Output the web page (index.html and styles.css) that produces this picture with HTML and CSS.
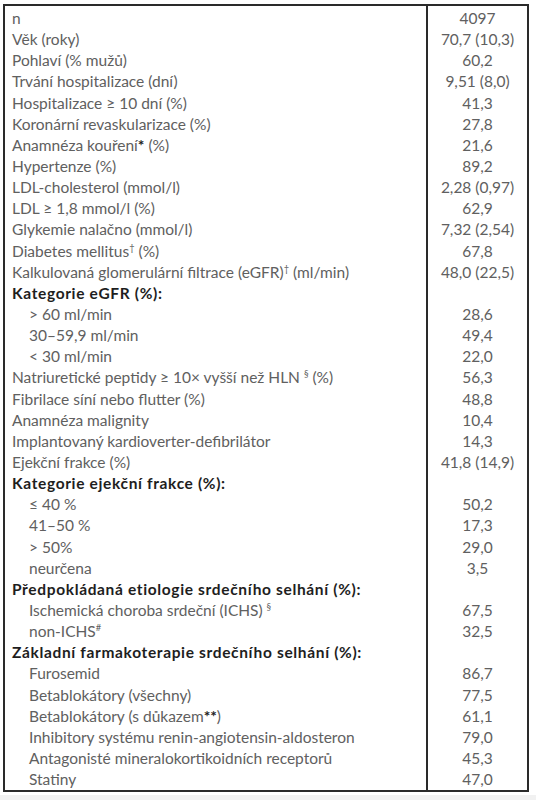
FILE: index.html
```html
<!DOCTYPE html>
<html lang="cs">

<head>
    <meta charset="UTF-8">
    <meta name="viewport" content="width=device-width, initial-scale=1.0">
    <title>Charakteristika souboru</title>

    <link rel="stylesheet" href="styles.css">
</head>

<body>
    <main class="sheet">
        <table class="data">
            <tbody>
                <tr><td>n</td><td class="value">4097</td></tr>
                <tr><td>Věk (roky)</td><td class="value">70,7 (10,3)</td></tr>
                <tr><td>Pohlaví (% mužů)</td><td class="value">60,2</td></tr>
                <tr><td>Trvání hospitalizace (dní)</td><td class="value">9,51 (8,0)</td></tr>
                <tr><td>Hospitalizace ≥ 10 dní (%)</td><td class="value">41,3</td></tr>
                <tr><td>Koronární revaskularizace (%)</td><td class="value">27,8</td></tr>
                <tr><td>Anamnéza kouření<span class="mark">*</span> (%)</td><td class="value">21,6</td></tr>
                <tr><td>Hypertenze (%)</td><td class="value">89,2</td></tr>
                <tr><td>LDL-cholesterol (mmol/l)</td><td class="value">2,28 (0,97)</td></tr>
                <tr><td>LDL ≥ 1,8 mmol/l (%)</td><td class="value">62,9</td></tr>
                <tr><td>Glykemie nalačno (mmol/l)</td><td class="value">7,32 (2,54)</td></tr>
                <tr><td>Diabetes mellitus<sup>†</sup> (%)</td><td class="value">67,8</td></tr>
                <tr><td>Kalkulovaná glomerulární filtrace (eGFR)<sup>†</sup> (ml/min)</td><td class="value">48,0 (22,5)</td></tr>
                <tr class="group"><td>Kategorie eGFR (%):</td><td class="value"></td></tr>
                <tr><td class="sub">&gt; 60 ml/min</td><td class="value">28,6</td></tr>
                <tr><td class="sub">30–59,9 ml/min</td><td class="value">49,4</td></tr>
                <tr><td class="sub">&lt; 30 ml/min</td><td class="value">22,0</td></tr>
                <tr><td>Natriuretické peptidy ≥ 10× vyšší než HLN <sup>§</sup> (%)</td><td class="value">56,3</td></tr>
                <tr><td>Fibrilace síní nebo flutter (%)</td><td class="value">48,8</td></tr>
                <tr><td>Anamnéza malignity</td><td class="value">10,4</td></tr>
                <tr><td>Implantovaný kardioverter-defibrilátor</td><td class="value">14,3</td></tr>
                <tr><td>Ejekční frakce (%)</td><td class="value">41,8 (14,9)</td></tr>
                <tr class="group"><td>Kategorie ejekční frakce (%):</td><td class="value"></td></tr>
                <tr><td class="sub">≤ 40 %</td><td class="value">50,2</td></tr>
                <tr><td class="sub">41–50 %</td><td class="value">17,3</td></tr>
                <tr><td class="sub">&gt; 50%</td><td class="value">29,0</td></tr>
                <tr><td class="sub">neurčena</td><td class="value">3,5</td></tr>
                <tr class="group"><td>Předpokládaná etiologie srdečního selhání (%):</td><td class="value"></td></tr>
                <tr><td class="sub">Ischemická choroba srdeční (ICHS) <sup>§</sup></td><td class="value">67,5</td></tr>
                <tr><td class="sub">non-ICHS<sup>#</sup></td><td class="value">32,5</td></tr>
                <tr class="group"><td>Základní farmakoterapie srdečního selhání (%):</td><td class="value"></td></tr>
                <tr><td class="sub">Furosemid</td><td class="value">86,7</td></tr>
                <tr><td class="sub">Betablokátory (všechny)</td><td class="value">77,5</td></tr>
                <tr><td class="sub">Betablokátory (s důkazem<span class="mark">**</span>)</td><td class="value">61,1</td></tr>
                <tr><td class="sub">Inhibitory systému renin-angiotensin-aldosteron</td><td class="value">79,0</td></tr>
                <tr><td class="sub">Antagonisté mineralokortikoidních receptorů</td><td class="value">45,3</td></tr>
                <tr><td class="sub">Statiny</td><td class="value">47,0</td></tr>
            </tbody>
        </table>
    </main>
</body>

</html>
```

FILE: styles.css
```css
:root {
    --text: #606060;
    --strong: #1e1e1e;
    --line: #2a2a2a;
    --page: #f1f1f1;
}

* {
    margin: 0;
    padding: 0;
    box-sizing: border-box;
}

body {
    background-color: var(--page);
    font-family: Lato, "Open Sans", sans-serif;
    font-size: 15.5px;
    color: var(--text);
}

.sheet {
    background-color: white;
    padding: 4px 7px 2px 3px;
    height: 795px;
}

.data {
    width: 526px;
    border-collapse: collapse;
    border: 2px solid var(--line);
}

.data td {
    line-height: 21.14px;
    padding: 0 0 0 7px;
    white-space: nowrap;
    vertical-align: middle;
}

.data tr:first-child td {
    padding-top: 2px;
}

.data td.value {
    width: 101px;
    padding: 0;
    text-align: center;
    border-left: 2px solid var(--line);
}

.data td.sub {
    padding-left: 24px;
}

.data .group td {
    color: var(--strong);
    font-weight: 700;
    letter-spacing: 0.65px;
}

.data .mark {
    font-weight: 700;
    color: var(--strong);
}

.data sup {
    font-size: 0.6em;
    line-height: 0;
    vertical-align: 0.6em;
}
```
